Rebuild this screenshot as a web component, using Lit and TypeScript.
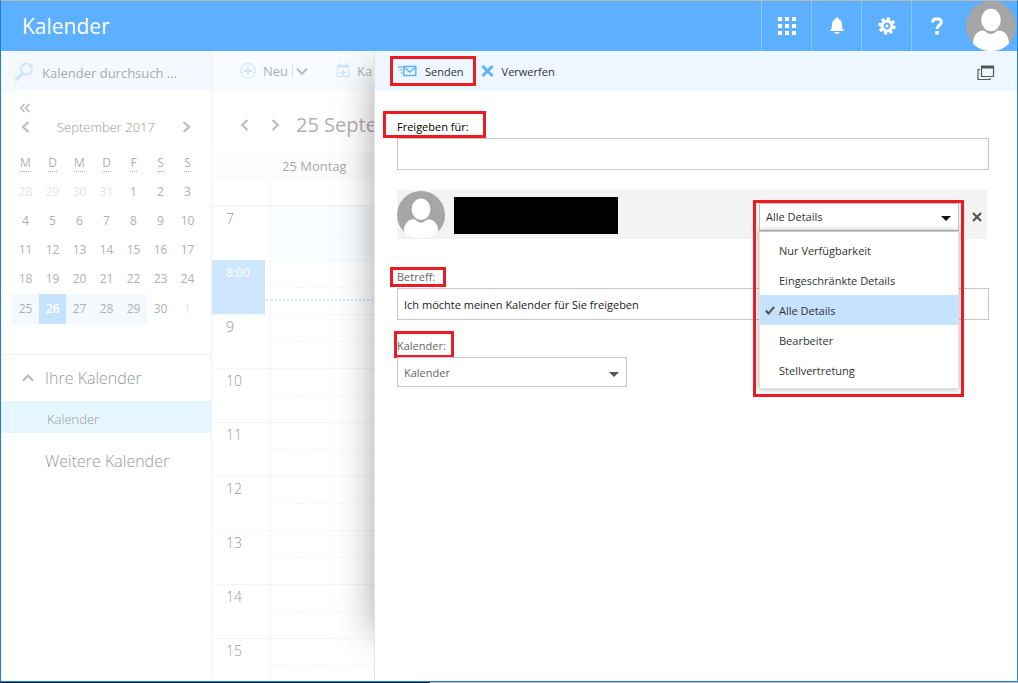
import { LitElement, html, css, svg } from "lit";
import { customElement, property, state } from "lit/decorators.js";
import { classMap } from "lit/directives/class-map.js";

const chevron = (d: string) => html`<svg class="chev" width="12" height="12" viewBox="0 0 12 12" fill="none" stroke="currentColor" stroke-width="2"><path d=${d} /></svg>`;
const LEFT = "M8.5 1 3 6l5.5 5";
const RIGHT = "M3.5 1 9 6l-5.5 5";
const UP = "M1 9l5-5.5L11 9";
const DOWN = "M1 3.5 6 9l5-5.5";

const caret = html`<svg class="caret" width="10" height="5" viewBox="0 0 10 5"><path d="M0 0h10L5 5z" fill="currentColor" /></svg>`;

@customElement("user-avatar")
export class UserAvatar extends LitElement {
  static styles = css`
    :host { display: block; }
    svg { display: block; width: 100%; height: 100%; }
  `;
  render() {
    return html`<svg viewBox="0 0 50 50">
      <circle cx="25" cy="25" r="25" fill="#a6a6a6" />
      <path d="M7 42.500C7 34 12 29.500 17.500 29.500c2 0 4 3.500 7.500 3.500s5.500-3.500 7.500-3.500C38 29.500 43 34 43 42.500 38.500 47.500 32 50 25 50S11.500 47.500 7 42.500z" fill="#fff" />
      <ellipse cx="25" cy="19" rx="10.500" ry="12" fill="#fff" stroke="#a6a6a6" stroke-width="1.500" />
    </svg>`;
  }
}

@customElement("top-bar")
export class TopBar extends LitElement {
  static styles = css`
    :host {
      display: flex;
      align-items: stretch;
      height: 50px;
      padding-right: 1px;
      background: #5cb0ff;
      color: #fff;
    }
    .title {
      flex: 1;
      margin: 0;
      padding-left: 21px;
      font-size: 21px;
      font-weight: 400;
      line-height: 50px;
    }
    .tile {
      display: grid;
      place-items: center;
      width: 50px;
      padding: 0;
      border: 0;
      border-left: 1px solid #8bc8ff;
      background: none;
      color: inherit;
    }
    .me {
      padding: 0;
      margin-left: 5px;
      width: 50px;
      border: 0;
      background: none;
    }
  `;
  render() {
    const dots = [0, 7, 14];
    return html`
      <h1 class="title">Kalender</h1>
      <button class="tile" aria-label="Apps">
        <svg width="18" height="18" viewBox="0 0 18 18" fill="#fff">
          ${dots.map((y) => dots.map((x) => svg`<rect x=${x} y=${y} width="4" height="4" />`))}
        </svg>
      </button>
      <button class="tile" aria-label="Benachrichtigungen">
        <svg width="16" height="18" viewBox="0 0 16 18" fill="#fff">
          <path d="M8 0.500c.9 0 1.400.6 1.400 1.400C11.900 2.700 13 4.800 13 7.500c0 3.500.7 4.800 2.300 6.500H.7C2.300 12.300 3 11 3 7.500c0-2.700 1.100-4.800 3.600-5.600C6.600 1.100 7.100.5 8 .5z" />
          <path d="M5.500 15h5c-.3 1.300-1.200 2-2.500 2s-2.200-.7-2.500-2z" />
        </svg>
      </button>
      <button class="tile" aria-label="Einstellungen">
        <svg width="18" height="18" viewBox="-9 -9 18 18">
          <g fill="#fff">
            ${[0, 45, 90, 135, 180, 225, 270, 315].map((a) => svg`<path d="M-2-5.500-1.500-8.700H1.500L2-5.500z" transform="rotate(${a + 12})" />`)}
          </g>
          <circle r="4.800" fill="none" stroke="#fff" stroke-width="2.800" />
          <circle r="1.500" fill="#fff" />
        </svg>
      </button>
      <button class="tile" aria-label="Hilfe">
        <svg width="12" height="18" viewBox="0 0 12 18" fill="none" stroke="#fff" stroke-width="3">
          <path d="M1.500 5.500C1.500 3 3.300 1.800 6 1.800s4.300 1.200 4.300 3.400C10.300 8.300 6 8.300 6 12" />
          <path d="M6 14v3.500" stroke-width="3.500" />
        </svg>
      </button>
      <button class="me" aria-label="Konto"><user-avatar></user-avatar></button>
    `;
  }
}

@customElement("side-bar")
export class SideBar extends LitElement {
  static styles = css`
    :host {
      display: block;
      box-sizing: border-box;
      width: 211px;
      border-right: 1px solid #f2f2f2;
      color: #b0b0b0;
    }
    button {
      padding: 0;
      border: 0;
      background: none;
      font: inherit;
      color: inherit;
    }
    .search {
      display: flex;
      align-items: center;
      gap: 8px;
      height: 40px;
      padding: 0 14px;
      background: #f3f9ff;
    }
    .search input {
      flex: 1;
      min-width: 0;
      padding: 4px 0 0;
      border: 0;
      outline: 0;
      background: none;
      font: inherit;
      font-size: 13px;
      color: #aaa;
    }
    .search input::placeholder { color: #aaa; }
    .collapse {
      display: block;
      height: 14px;
      margin: 10px 0 0 18px;
    }
    .collapse svg { display: block; }
    .month {
      display: flex;
      align-items: center;
      justify-content: space-between;
      height: 24px;
      padding: 0 19px;
      font-size: 13px;
      font-weight: 300;
      color: #999;
    }
    .chev { display: block; color: #bbb; }
    .days {
      width: 189px;
      margin: 9px 0 30px 11px;
      border-collapse: collapse;
      table-layout: fixed;
      font-size: 12px;
      line-height: 16px;
      text-align: center;
    }
    .days th, .days td { height: 29px; padding: 0; font-weight: 400; }
    .days tr:nth-child(n + 5) td { height: 30px; }
    .days abbr { text-decoration: none; border-bottom: 1px dotted #aaa; line-height: 14px; }
    .days .out { color: #e6e6e6; }
    .days .week { background: #f3f9ff; }
    .days .today { background: #c5e2ff; color: #fff; font-weight: 600; }
    .group {
      display: flex;
      align-items: center;
      gap: 11px;
      height: 46px;
      padding-left: 21px;
      font-size: 16px;
      font-weight: 300;
      color: #999;
    }
    .first { border-top: 1px solid #f2f2f2; }
    .more { padding-left: 44px; margin-top: 5px; }
    .entry {
      display: block;
      width: 100%;
      height: 32px;
      padding: 4px 0 0 46px;
      background: #e6f6fe;
      font-size: 13px;
      font-weight: 300;
      color: #999;
      text-align: left;
    }
  `;
  render() {
    const weeks = [
      [28, 29, 30, 31, 1, 2, 3],
      [4, 5, 6, 7, 8, 9, 10],
      [11, 12, 13, 14, 15, 16, 17],
      [18, 19, 20, 21, 22, 23, 24],
      [25, 26, 27, 28, 29, 30, 1],
    ];
    return html`
      <label class="search">
        <svg width="19" height="19" viewBox="0 0 19 19" fill="none" stroke="#cfe6ff">
          <circle cx="11.500" cy="7" r="5.500" stroke-width="2.200" />
          <path d="M7.500 11.500 1.500 17.500" stroke-width="3.200" stroke-linecap="round" />
        </svg>
        <input type="search" placeholder="Kalender durchsuch ..." />
      </label>
      <button class="collapse" aria-label="Einklappen">
        <svg width="12" height="12" viewBox="0 0 12 12" fill="none" stroke="#bbb" stroke-width="1.500">
          <path d="M5.500 2 1.500 6l4 4M10.500 2l-4 4 4 4" />
        </svg>
      </button>
      <div class="month">
        <button aria-label="Voriger Monat">${chevron(LEFT)}</button>
        <span>September 2017</span>
        <button aria-label="Nächster Monat">${chevron(RIGHT)}</button>
      </div>
      <table class="days">
        <tr>${["M", "D", "M", "D", "F", "S", "S"].map((d) => html`<th><abbr>${d}</abbr></th>`)}</tr>
        ${weeks.map((w, r) => html`<tr>
          ${w.map((d, c) => html`<td class=${classMap({
            out: (r === 0 && d > 7) || (r === 4 && d === 1),
            week: r === 4 && c < 5,
            today: r === 4 && d === 26,
          })}>${d}</td>`)}
        </tr>`)}
      </table>
      <div class="group first">${chevron(UP)}<span>Ihre Kalender</span></div>
      <button class="entry">Kalender</button>
      <div class="group more">Weitere Kalender</div>
    `;
  }
}

@customElement("day-view")
export class DayView extends LitElement {
  static styles = css`
    :host {
      display: block;
      overflow: hidden;
      color: #b0b0b0;
    }
    button {
      display: flex;
      align-items: center;
      padding: 0;
      border: 0;
      background: none;
      font: inherit;
      color: inherit;
    }
    .chev { display: block; color: #bbb; }
    .tools {
      display: flex;
      align-items: center;
      height: 40px;
      padding-left: 28px;
      background: #f8fcff;
      font-size: 13px;
      white-space: nowrap;
    }
    .tools button { gap: 7px; }
    .tools .split {
      padding-left: 3px;
      margin: 0 28px 0 4px;
      border-left: 1px solid #ddd;
    }
    .nav {
      display: flex;
      align-items: center;
      gap: 18px;
      height: 60px;
      padding: 7px 0 0 27px;
      box-sizing: border-box;
    }
    .nav h2 {
      margin: 0 0 0 -3px;
      font-size: 20px;
      font-weight: 400;
      white-space: nowrap;
    }
    .day {
      height: 29px;
      padding-left: 70px;
      background: #fcfcfc;
      font-size: 13px;
      line-height: 30px;
      color: #a8a8a8;
    }
    .row {
      display: grid;
      grid-template-columns: 59px 1fr;
      height: 54px;
      box-sizing: border-box;
      border-bottom: 1px solid #f5f5f5;
    }
    .allday { height: 27px; border-bottom-width: 2px; }
    .time {
      padding: 3px 0 0 14px;
      border-right: 1px solid #f5f5f5;
      font-size: 14px;
      font-weight: 300;
      line-height: 18px;
      color: #999;
    }
    .slot { display: grid; grid-template-rows: 27px 1fr; }
    .half { border-bottom: 1px dashed #f5f5f5; }
    .light { background: #f8fdff; }
    .now .time { display: grid; padding: 0; }
    .badge {
      width: 39px;
      height: 50px;
      margin-top: -1px;
      padding: 4px 0 0 14px;
      background: #cfe6ff;
      color: #fff;
      font-size: 12px;
      font-weight: 400;
    }
    .line { margin: 11px 0 0 -5px; height: 0; border-top: 2px dotted #cfe6ff; }
  `;
  render() {
    return html`
      <div class="tools">
        <button>
          <svg width="16" height="16" viewBox="0 0 16 16" fill="none" stroke="#cfe6ff">
            <circle cx="8" cy="8" r="7.300" stroke-width="1.200" />
            <path d="M8 4v8M4 8h8" stroke-width="1.800" />
          </svg>
          Neu
        </button>
        <button class="split" aria-label="Weitere Optionen">${chevron(DOWN)}</button>
        <button>
          <svg width="14" height="16" viewBox="0 0 14 16" fill="none" stroke="#cfe6ff">
            <path d="M1.500 2.500h11v11h-11z" stroke-width="1.200" />
            <path d="M1 3.500h12" stroke-width="2.500" />
            <path d="M4 0v3M10 0v3M7 6.500v6M4 9.500h6" stroke-width="1.700" />
          </svg>
          Ka
        </button>
      </div>
      <div class="nav">
        <button aria-label="Zurück">${chevron(LEFT)}</button>
        <button aria-label="Vor">${chevron(RIGHT)}</button>
        <h2>25 Septe</h2>
      </div>
      <div class="day">25 Montag</div>
      <div class="row allday"><div class="time"></div><div></div></div>
      ${[7, 8, 9, 10, 11, 12, 13, 14, 15].map((h) => html`
        <div class=${classMap({ row: true, now: h === 8 })}>
          <div class="time">${h === 8 ? html`<div class="badge">8:00</div>` : h}</div>
          <div class=${classMap({ slot: true, light: h === 7 })}>
            <div class="half"></div>
            ${h === 8 ? html`<div class="line"></div>` : ""}
          </div>
        </div>`)}
    `;
  }
}

@customElement("access-picker")
export class AccessPicker extends LitElement {
  @property() value = "Alle Details";
  @state() private open = true;
  private levels = ["Nur Verfügbarkeit", "Eingeschränkte Details", "Alle Details", "Bearbeiter", "Stellvertretung"];

  static styles = css`
    :host { display: block; position: relative; width: 200px; }
    .mark {
      position: absolute;
      z-index: 2;
      inset: -3px -5px -166px -6px;
      border: 3px solid #ed1c24;
      pointer-events: none;
    }
    select {
      display: block;
      width: 100%;
      height: 28px;
      padding: 0 6px;
      box-sizing: border-box;
      appearance: none;
      border: 1px solid #c0c0c0;
      border-radius: 0;
      background: #fff;
      color: #333;
      font: inherit;
      font-size: 11px;
    }
    .caret { position: absolute; right: 8px; top: 13px; color: #111; pointer-events: none; }
    .menu {
      position: absolute;
      z-index: 1;
      top: 28px;
      left: 0;
      right: 0;
      margin: 0;
      padding: 3px 0;
      list-style: none;
      border: 1px solid #e2e2e2;
      border-top-color: #ccc;
      background: #fff;
      box-shadow: 0 0 6px rgba(0, 0, 0, 0.35);
    }
    .item {
      display: grid;
      grid-template-columns: 19px 1fr;
      align-items: center;
      width: 100%;
      height: 30px;
      padding: 2px 0 0;
      border: 0;
      background: none;
      color: #333;
      font: inherit;
      font-size: 11px;
      text-align: left;
    }
    .item svg { margin-left: 5px; }
    .chosen { background: #c5e2ff; }
  `;

  private pick(level: string) {
    this.value = level;
    this.open = false;
  }

  render() {
    return html`
      <select aria-label="Berechtigung" @mousedown=${(e: Event) => { e.preventDefault(); this.open = !this.open; }}>
        ${this.levels.map((l) => html`<option ?selected=${l === this.value}>${l}</option>`)}
      </select>
      ${caret}
      ${this.open ? html`<ul class="menu">
        ${this.levels.map((l) => html`<li>
          <button class=${classMap({ item: true, chosen: l === this.value })} @click=${() => this.pick(l)}>
            <span>${l === this.value ? html`<svg width="10" height="9" viewBox="0 0 10 9" fill="none" stroke="#555" stroke-width="2"><path d="M.8 4.500 3.500 7.500 9.200 1" /></svg>` : ""}</span>
            ${l}
          </button></li>`)}
      </ul>` : ""}
      <div class="mark"></div>
    `;
  }
}

@customElement("share-panel")
export class SharePanel extends LitElement {
  static styles = css`
    :host { display: block; background: #fff; color: #333; font-size: 11px; }
    button {
      display: flex;
      align-items: center;
      padding: 0;
      border: 0;
      background: none;
      font: inherit;
      color: inherit;
    }
    .marked { position: relative; }
    .marked::after {
      content: "";
      position: absolute;
      inset: var(--mark);
      border: 3px solid #ed1c24;
      pointer-events: none;
    }
    .tools {
      display: flex;
      align-items: center;
      height: 40px;
      padding: 0 22px 0 23px;
      background: #eef6ff;
    }
    .tools button { height: 30px; gap: 8px; }
    .tools .send { --mark: 0 -12px 0 -8px; margin-right: 17px; }
    .tools .popout { margin: 4px 0 0 auto; }
    .form { display: block; padding: 28px 28px 0 22px; }
    .label {
      display: block;
      width: max-content;
      line-height: 16px;
      color: #666;
    }
    .to { --mark: -8px -17px -3px -14px; color: #000; margin-bottom: 3px; }
    .subject { --mark: -2px -11px -2px -7px; margin: 30px 0 3px; }
    .cal { --mark: -7px -8px -4px -3px; margin: 18px 0 3px; }
    .box {
      display: block;
      width: 100%;
      height: 32px;
      padding: 0 6px;
      box-sizing: border-box;
      border: 1px solid #c6c6c6;
      border-radius: 0;
      outline: 0;
      background: #fff;
      color: #222;
      font: inherit;
    }
    .person {
      display: flex;
      align-items: center;
      height: 49px;
      margin: 20px 2px 0 0;
      background: #f3f3f3;
    }
    .person user-avatar { width: 48px; height: 48px; }
    .name { width: 164px; height: 37px; margin: 1px auto 0 9px; background: #000; }
    .person access-picker { margin-bottom: -4px; }
    .remove { margin: 4px 5px 0 13px; }
    .pick { position: relative; width: 230px; }
    .pick .box { height: 30px; appearance: none; color: #666; }
    .pick .caret { position: absolute; right: 8px; top: 15px; color: #555; pointer-events: none; }
  `;
  render() {
    return html`
      <div class="tools">
        <button class="send marked">
          <svg width="19" height="12" viewBox="0 0 19 12" fill="none" stroke="#5cb0ff">
            <path d="M5.800 1.500h12v9h-12z" stroke-width="1.400" />
            <path d="M6 2l5.800 5L18 2" stroke-width="1.400" />
            <path d="M0 1.800h4.500M1.500 5h3M3 8.200h1.500" stroke-width="1.200" />
          </svg>
          Senden
        </button>
        <button>
          <svg width="13" height="12" viewBox="0 0 13 12" stroke="#5cb0ff" stroke-width="2.800"><path d="M1.500 1l10 10M11.500 1l-10 10" /></svg>
          Verwerfen
        </button>
        <button class="popout" aria-label="In neuem Fenster öffnen">
          <svg width="18" height="16" viewBox="0 0 18 16" fill="none" stroke="#555">
            <path d="M4.500 1.500h12v10h-12z" stroke-width="1.200" />
            <path d="M4 2h13" stroke-width="3" />
            <path d="M3 4.500H1v10h12V13" stroke-width="1.200" />
          </svg>
        </button>
      </div>
      <form class="form">
        <label class="label to marked" for="to">Freigeben für:</label>
        <input class="box" id="to" type="text" />
        <div class="person">
          <user-avatar></user-avatar>
          <div class="name"></div>
          <access-picker></access-picker>
          <button class="remove" type="button" aria-label="Entfernen">
            <svg width="10" height="10" viewBox="0 0 10 10" stroke="#555" stroke-width="2.200"><path d="M1 1l8 8M9 1 1 9" /></svg>
          </button>
        </div>
        <label class="label subject marked" for="subject">Betreff:</label>
        <input class="box" id="subject" type="text" value="Ich möchte meinen Kalender für Sie freigeben" />
        <label class="label cal marked" for="cal">Kalender:</label>
        <div class="pick">
          <select class="box" id="cal"><option>Kalender</option></select>
          ${caret}
        </div>
      </form>
    `;
  }
}

@customElement("app-root")
export class AppRoot extends LitElement {
  static styles = css`
    :host {
      display: flex;
      flex-direction: column;
      height: 100vh;
      background: #fff;
      font-family: "Open Sans", "Noto Sans", sans-serif;
    }
    .window {
      flex: 1;
      min-height: 0;
      display: flex;
      flex-direction: column;
      border: 1px solid #1e7fd0;
      border-top-color: #b9b9b9;
    }
    .body {
      flex: 1;
      min-height: 0;
      position: relative;
      display: flex;
      overflow: hidden;
    }
    day-view { flex: 1; min-width: 0; }
    .shade {
      position: absolute;
      inset: 20px 0 48px 374px;
      box-shadow: 0 0 36px rgba(0, 0, 0, 0.38);
    }
    share-panel {
      position: absolute;
      inset: 0 0 0 373px;
      border-left: 1px solid #e4e4e4;
    }
    .desk {
      height: 1px;
      background: linear-gradient(90deg, #04223f 430px, #c0bcbc 430px);
    }
  `;
  render() {
    return html`
      <div class="window">
        <top-bar></top-bar>
        <div class="body">
          <side-bar></side-bar>
          <day-view></day-view>
          <div class="shade"></div>
          <share-panel></share-panel>
        </div>
      </div>
      <div class="desk"></div>
    `;
  }
}
